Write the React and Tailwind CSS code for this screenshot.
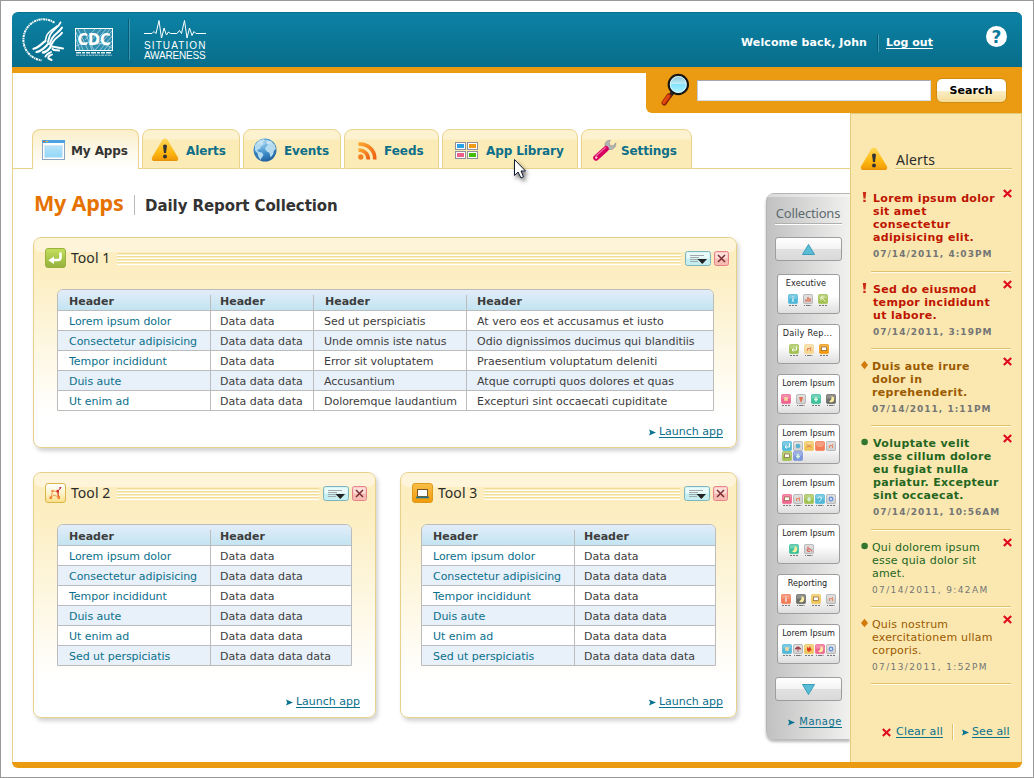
import React from "react";

/* ---------- logos ---------- */

function HhsLogo() {
  return (
    <svg className="block h-11 w-11" viewBox="0 0 44 44" fill="none">
      <path d="M33.500 4.700A20.600 20.600 0 0 0 18 1.700A20.700 20.700 0 0 0 20.500 42.300" stroke="#fff" strokeWidth="2" strokeDasharray="2.300 .7 1.200 .6" />
      <g stroke="#fff" strokeLinecap="round">
        <path d="M39.500 4.500C37.500 10 30.500 11.500 28.500 18.500L27 24" strokeWidth="1.900" />
        <path d="M41 9.500C39 14 33.500 15.500 31 20.500L28.500 26" strokeWidth="1.900" />
        <path d="M41 14.800C39 18.500 34.500 19.500 32.500 23L29.500 28" strokeWidth="1.900" />
        <path d="M36 8C33 11 27 13 25.500 18L24.500 22" strokeWidth="1.500" />
        <path d="M24.500 23C21 25 18 29.500 12.500 30.800" strokeWidth="2.200" />
        <path d="M27 26C24 29 21 33 15.500 34" strokeWidth="2.200" />
        <path d="M29.500 29C27 32 26.500 34 22 34.500" strokeWidth="2.400" />
        <path d="M31 28.500L42 30.500M31.500 31C34 33.500 36 31.500 38 32.500" strokeWidth="2" />
        <path d="M30 34C27.500 35.500 25.500 36 24.500 38.500M31 36.500C29.500 37.500 26.500 37.500 27.500 40.500L30.500 42" strokeWidth="2" />
      </g>
    </svg>
  );
}

function CdcLogo() {
  return (
    <svg className="block h-7 w-[38px] overflow-visible" viewBox="0 0 38 28">
      <rect x=".5" y=".5" width="37" height="22" fill="#2f8fae" stroke="#fff" />
      <g stroke="#bfe0ea" strokeWidth=".7" fill="none">
        <path d="M1 4L8 22M1 11L5 22M3 1L13 22M9 1L17 22M16 17L19 22M37 3L20 22M37 8L25 22M37 13L29 22M37 17L33 22M31 1L17 18M26 1L15 14M20 1L10 12M35 1L22 17" />
        <path d="M1 18C10 13 25 13 37 20" />
      </g>
      <text x="2.500" y="16.500" textLength="33" lengthAdjust="spacingAndGlyphs" fill="#fff" className="font-['DejaVu_Sans'] text-[16px] font-bold">CDC</text>
      <path d="M1 24.700H37" stroke="#fff" strokeWidth="1.600" strokeDasharray="5 1 3 1 4 1" opacity=".9" />
      <path d="M1 27.200H37" stroke="#fff" strokeWidth="1" strokeDasharray="3 .7 2 .6" opacity=".7" />
    </svg>
  );
}

function SituationLogo() {
  return (
    <div className="flex w-16 flex-col font-['Liberation_Sans',sans-serif] text-[10px] leading-[10px] text-white">
      <svg className="block h-5 w-[63px]" viewBox="0 0 63 20" fill="none" stroke="#fff" strokeLinejoin="round">
        <path d="M0 15.500H8L10 13.500L12 15.500L15 2.500L17.500 20.500L20 10L22.500 17L24.500 14L26.500 15.500H33L35.500 12.500L37.500 15.500L40.500 2.500L43 20L45.500 10L48 17.500L50 13.500L52 15.500H62" />
      </svg>
      <span className="mt-[3px] whitespace-nowrap tracking-[1.1px]">SITUATION</span>
      <span className="whitespace-nowrap tracking-[-0.2px]">AWARENESS</span>
    </div>
  );
}

/* ---------- icons ---------- */

function WarningIcon() {
  return (
    <svg className="block h-[23px] w-7 shrink-0" viewBox="0 0 28 23">
      <defs>
        <linearGradient id="warn" x1="0" y1="0" x2="0" y2="1">
          <stop offset="0" stopColor="#ffd75a" />
          <stop offset=".6" stopColor="#fdb813" />
          <stop offset="1" stopColor="#f09a05" />
        </linearGradient>
      </defs>
      <path d="M11.600 1.600Q14 -.8 16.400 1.600L27 19.500Q28 22.800 25 22.800H3Q0 22.800 1 19.500Z" fill="url(#warn)" />
      <path d="M2 22.300H26" stroke="#e58c00" />
      <path d="M12 7.500Q14 5.300 16 7.500L15 15H13Z" fill="#333" />
      <circle cx="14" cy="18.500" r="2" fill="#333" />
    </svg>
  );
}

function WindowIcon() {
  return (
    <svg className="block h-5 w-[23px]" viewBox="0 0 23 20">
      <defs>
        <linearGradient id="win" x1="0" y1="0" x2="0" y2="1">
          <stop offset="0" stopColor="#b9e3f8" />
          <stop offset="1" stopColor="#90d8f8" />
        </linearGradient>
      </defs>
      <rect x=".5" y=".5" width="22" height="19" fill="#fff" stroke="#8ba6c4" />
      <rect width="23" height="3" fill="#4aa3e0" />
      <path d="M1 1.500h2" stroke="#e8542c" />
      <path d="M4 1.500h2" stroke="#e9c33a" />
      <rect x="2.500" y="5.500" width="18" height="12" fill="url(#win)" stroke="#d4e9f5" />
    </svg>
  );
}

function GlobeIcon() {
  return (
    <svg className="block h-6 w-6" viewBox="0 0 24 24">
      <defs>
        <radialGradient id="globe" cx=".4" cy=".25" r=".8">
          <stop offset="0" stopColor="#8cc6ea" />
          <stop offset=".5" stopColor="#3f8fca" />
          <stop offset="1" stopColor="#1d5c9a" />
        </radialGradient>
      </defs>
      <circle cx="12" cy="12" r="11.500" fill="url(#globe)" />
      <g fill="#b5dbf0">
        <path d="M2 7L6 2.500L11 1L12 3L9.500 4L10.500 6.500L8 8.500L7 11L4 12L6 14L9 14.500L10.500 17L8.500 20L7.500 22L5.500 19L4.500 15L2 12.500Z" />
        <path d="M13 2L18 3L21.500 6.500L23 11L21 12.500L20 16.500L17.500 19.500L16.500 15L14 13.500L12 11L13 8.500L15 7L13.500 5Z" />
      </g>
      <path d="M4 5Q12 -1 20 5Q12 8 4 5Z" fill="#fff" opacity=".25" />
    </svg>
  );
}

function RssIcon() {
  return (
    <svg className="block h-[18px] w-[19px]" viewBox="0 0 19 18" fill="none">
      <defs>
        <linearGradient id="rss" x1="0" y1="0" x2="1" y2="1">
          <stop offset="0" stopColor="#fba62f" />
          <stop offset="1" stopColor="#ee5f12" />
        </linearGradient>
      </defs>
      <path d="M.5 2.200A14.500 14 0 0 1 16.600 17.500" stroke="url(#rss)" strokeWidth="3.600" />
      <path d="M.5 8.200A9 9 0 0 1 10.300 17.500" stroke="url(#rss)" strokeWidth="3.600" />
      <circle cx="2.800" cy="15" r="2.700" fill="#f58220" />
    </svg>
  );
}

function LibraryIcon() {
  const tiles = [
    [0, 0, "#2ba3e4"],
    [12, 0, "#f09b18"],
    [0, 9, "#ec5f87"],
    [12, 9, "#46bd06"],
  ];
  return (
    <svg className="block h-[18px] w-6" viewBox="0 0 24 18">
      {tiles.map(([x, y, c]) => (
        <g key={c}>
          <rect x={x + 0.5} y={y + 0.5} width="10" height="7" fill="#fff" stroke="#8f8f9a" />
          <rect x={x + 2} y={y + 2} width="7" height="4" fill={c} />
        </g>
      ))}
    </svg>
  );
}

function WrenchIcon() {
  return (
    <svg className="block h-[22px] w-6" viewBox="0 0 24 22" fill="none">
      <path d="M14 8L16 10" stroke="#999" strokeWidth="4" />
      <path d="M17.500 1.300Q13 1 12 5Q11.500 9.500 15 10.800Q19.500 11.500 22.500 7.500L22.800 3.800L19.800 7L16.500 6L16.300 3Z" fill="#b4b4b6" stroke="#8f8f92" strokeWidth=".6" />
      <path d="M3 18.800L13 9.800" stroke="#d8005f" strokeWidth="5.600" strokeLinecap="round" />
      <path d="M3 17L12.500 8.500" stroke="#f45f9e" strokeWidth="1.400" strokeLinecap="round" />
      <circle cx="3.300" cy="18.600" r="1.200" fill="#f9d3e2" />
    </svg>
  );
}

function MagnifierIcon() {
  return (
    <svg className="block h-[33px] w-[30px]" viewBox="0 -1 30 33" fill="none">
      <defs>
        <linearGradient id="lens" x1="0" y1="0" x2="0" y2="1">
          <stop offset="0" stopColor="#7fbccb" />
          <stop offset=".45" stopColor="#bdeef8" />
          <stop offset=".5" stopColor="#86e4fb" />
          <stop offset="1" stopColor="#b5f3ff" />
        </linearGradient>
      </defs>
      <path d="M13 18L9.500 22.500" stroke="#222" strokeWidth="4" />
      <path d="M9 22L4.300 28.800" stroke="#8f2106" strokeWidth="5.400" strokeLinecap="round" />
      <path d="M8.500 22L3.800 28.500" stroke="#e4480f" strokeWidth="3" strokeLinecap="round" />
      <circle cx="18.300" cy="10.500" r="9.600" fill="url(#lens)" stroke="#171717" strokeWidth="2.200" />
      <circle cx="18.300" cy="10.500" r="8" stroke="#e8fbff" strokeWidth=".8" />
    </svg>
  );
}

function HelpIcon() {
  return (
    <span className="flex h-[21px] w-[21px] items-center justify-center rounded-full bg-white pt-px font-['DejaVu_Sans',sans-serif] text-[17px] leading-none font-bold text-[#0a7a9a]">
      ?
    </span>
  );
}

function Cross() {
  return (
    <svg className="block h-[9px] w-[9px] shrink-0" viewBox="0 0 9 9" stroke="#df0a1d" strokeWidth="2.100">
      <path d="M.8 1L8.200 8M8.200 1L.8 8" />
    </svg>
  );
}

function ArrowHead() {
  return (
    <svg className="block h-[7px] w-[7px] shrink-0" viewBox="0 0 7 7">
      <path d="M0 0.500L7 3.500L0 6.500L1.200 3.500Z" fill="#0a738f" />
    </svg>
  );
}

function Cursor() {
  return (
    <svg className="absolute top-[28px] left-[70px] z-10 h-[26px] w-[18px] drop-shadow-[2px_3px_2px_rgba(0,0,0,0.55)]" viewBox="0 0 18 26">
      <path d="M1.500 1.500V17.500L5 14L8 20L10.500 18.800L8 13H12.500Z" fill="#fff" stroke="#111b33" />
    </svg>
  );
}

/* ---------- header ---------- */

function Header() {
  return (
    <header className="flex h-[55px] shrink-0 rounded-t-md border-t border-[#0a6f8c] bg-gradient-to-b from-[#0c82a4] to-[#086d8a] pr-[15px] pl-[9px]">
      <div className="pt-[5px]"><HhsLogo /></div>
      <div className="ml-[10px] pt-[15px]"><CdcLogo /></div>
      <div className="mt-1.5 ml-[15px] h-[41px] w-0.5 border-r border-[#3c9ab5] bg-[#075d77]" />
      <div className="ml-[14px] pt-[5px]"><SituationLogo /></div>
      <div className="ml-auto flex pt-[21px] font-['DejaVu_Sans',sans-serif] text-[11px] leading-[18px] font-bold text-white">
        <span className="w-[126px] whitespace-nowrap tracking-[0.1px]">Welcome back, John</span>
        <span className="ml-[10px] h-[18px] w-0.5 border-r border-[#3c9ab5] bg-[#075d77]" />
        <a className="ml-[7px] w-[54px] whitespace-nowrap underline underline-offset-2">Log out</a>
      </div>
      <div className="ml-[46px] pt-[13px]"><HelpIcon /></div>
    </header>
  );
}

function SearchBar() {
  return (
    <div className="flex h-10 w-[376px] rounded-bl-md bg-[#eb9b11] pl-[14px] font-['DejaVu_Sans',sans-serif]">
      <MagnifierIcon />
      <div className="mt-[7px] ml-[7px] h-[21px] w-[234px] border border-t-[#a5a5b5] border-r-[#d5dbe8] border-b-[#d5dbe8] border-l-[#c5cada] bg-white" />
      <button className="mt-[5px] ml-[5px] flex h-[25px] w-[71px] items-center justify-center rounded-md border border-[#cf8a10] bg-gradient-to-b from-white from-50% via-[#fcefc8] via-50% to-[#f5dc94] pt-px pr-px text-[11px] font-bold tracking-[0.1px] text-black">
        Search
      </button>
    </div>
  );
}

const tabs = [
  { label: "My Apps", Icon: WindowIcon, box: "w-[107px] pl-[9px]", gap: "ml-[6px] tracking-[-0.1px]", icon: "pt-[10px]", active: true },
  { label: "Alerts", Icon: WarningIcon, box: "w-[98px] pl-[8px]", gap: "ml-[7px] tracking-[-0.1px]", icon: "pt-[8px]" },
  { label: "Events", Icon: GlobeIcon, box: "w-[98px] pl-[9px]", gap: "ml-[7px] tracking-[-0.1px]", icon: "pt-[8px]" },
  { label: "Feeds", Icon: RssIcon, box: "w-[95px] pl-[13px]", gap: "ml-[7px]", icon: "pt-[12px]" },
  { label: "App Library", Icon: LibraryIcon, box: "w-[136px] pl-[12px]", gap: "ml-[7px] tracking-[-0.1px]", icon: "pt-[12px]", cursor: true },
  { label: "Settings", Icon: WrenchIcon, box: "w-[111px] pl-[11px]", gap: "ml-[4px] tracking-[-0.1px]", icon: "pt-[9px]" },
];

function Tabs() {
  return (
    <nav className="mt-4 flex h-10 shrink-0 font-['DejaVu_Sans',sans-serif]">
      <div className="w-[19px] border-b border-[#e8d189]" />
      {tabs.map(({ label, Icon, box, gap, icon, active, cursor }) => (
        <React.Fragment key={label}>
          <div
            className={`relative flex rounded-t-lg border border-[#ead48d] ${box} ${
              active
                ? "border-b-0 bg-gradient-to-b from-[#fbefcb] to-white"
                : "bg-[linear-gradient(#fdf2d0_9px,#fbebb6_10px)]"
            }`}
          >
            <span className={icon}><Icon /></span>
            <span className={`${gap} pt-3 text-[12px] leading-[18px] font-bold whitespace-nowrap ${active ? "text-[#333]" : "text-[#0d6e89]"}`}>
              {label}
            </span>
            {cursor && <Cursor />}
          </div>
          {label !== "Settings" && <div className="w-[3px] border-b border-[#e8d189]" />}
        </React.Fragment>
      ))}
      <div className="flex-1 border-b border-[#e8d189]" />
    </nav>
  );
}

/* ---------- tool cards ---------- */

function ReturnBadge() {
  return (
    <svg className="block h-5 w-[21px]" viewBox="0 0 21 20">
      <defs>
        <linearGradient id="ret" x1="0" y1="0" x2="0" y2="1">
          <stop offset="0" stopColor="#c3e05c" />
          <stop offset="1" stopColor="#93b03c" />
        </linearGradient>
      </defs>
      <rect x=".5" y=".5" width="20" height="19" rx="2.500" fill="url(#ret)" stroke="#9bb13f" />
      <path d="M15.500 4.500V9.500Q15.500 12 13 12H8" fill="none" stroke="#fff" strokeWidth="2.600" />
      <path d="M3.300 12.200L9 8.500V16Z" fill="#fff" />
    </svg>
  );
}

function GraphBadge() {
  return (
    <svg className="block h-5 w-[21px]" viewBox="0 0 21 20">
      <defs>
        <linearGradient id="gra" x1="0" y1="0" x2="0" y2="1">
          <stop offset="0" stopColor="#fff" />
          <stop offset=".5" stopColor="#fef3cd" />
          <stop offset="1" stopColor="#fbdf83" />
        </linearGradient>
      </defs>
      <rect x=".5" y=".5" width="20" height="19" rx="2.500" fill="url(#gra)" stroke="#d9b649" />
      <path d="M7.500 8L12.500 8.500L13 14M7.500 8L6 14.500L9 12L13.500 14" fill="none" stroke="#f79a52" />
      <path d="M12.500 8.500L16 4.500" stroke="#b5243c" />
      <path d="M13 8L13.500 14" stroke="#d4402c" />
      <g fill="#f58233">
        <rect x="6.500" y="7" width="2" height="2" />
        <rect x="4.500" y="13.500" width="2.500" height="2.500" />
        <rect x="12.500" y="13" width="2.500" height="3" />
      </g>
      <rect x="11.500" y="7" width="2.500" height="2.500" fill="#d52a2a" />
      <rect x="14.500" y="4" width="1.500" height="1.500" fill="#c02038" />
    </svg>
  );
}

function LaptopBadge() {
  return (
    <svg className="block h-5 w-[21px]" viewBox="0 0 21 20">
      <defs>
        <linearGradient id="lap" x1="0" y1="0" x2="0" y2="1">
          <stop offset="0" stopColor="#f9c04a" />
          <stop offset="1" stopColor="#f19a08" />
        </linearGradient>
      </defs>
      <rect x=".5" y=".5" width="20" height="19" rx="2.500" fill="url(#lap)" stroke="#dd9a1b" />
      <rect x="5.500" y="6.500" width="10" height="7" fill="#fff" stroke="#7a5a28" />
      <path d="M4 14.500H17" stroke="#25758a" strokeWidth="1.600" />
    </svg>
  );
}

const headPad = ["pl-[11px]", "border-l pl-[9px]", "border-l pl-[11px]", "border-l pl-[10px]"];
const cellPad = [
  "pl-[11px] tracking-[-0.04px] text-[#0b708c]",
  "border-l pl-[9px]",
  "border-l pl-[10px] tracking-[-0.03px]",
  "border-l pl-[10px]",
];

function DataTable({ columns, rows, grid }) {
  return (
    <div className="overflow-hidden rounded-t-md border border-[#bcbcbc] text-[11px] text-[#3d3d3d]">
      <div className={`grid h-5 bg-gradient-to-b from-[#e2edf9] to-[#c3e4f1] font-bold ${grid}`}>
        {columns.map((c, i) => (
          <div key={i} className="flex flex-col">
            <div className="h-[5px] shrink-0" />
            <div className={`flex-1 border-[#bcbcbc] leading-[13px] ${headPad[i]}`}>{c}</div>
          </div>
        ))}
      </div>
      {rows.map((row, r) => (
        <div key={r} className={`grid h-5 border-t border-[#bcbcbc] ${r % 2 ? "bg-[#e8f0f9]" : "bg-white"} ${grid}`}>
          {row.map((cell, i) => (
            <div key={i} className={`h-[19px] border-[#bcbcbc] leading-[21px] whitespace-nowrap ${cellPad[i]}`}>
              {cell}
            </div>
          ))}
        </div>
      ))}
    </div>
  );
}

function ToolCard({ title, badge, size, pad, right, launch, table }) {
  return (
    <section
      className={`flex shrink-0 flex-col rounded-lg border border-[#e6d08a] bg-gradient-to-b from-[#fceec0] from-15% to-white to-85% shadow-[2px_3px_4px_rgba(0,0,0,0.18)] ${size}`}
    >
      <div className="-mb-[14px] h-[14px] shrink-0 rounded-lg bg-[#fef4d9]" />
      <div className={`flex h-[41px] shrink-0 items-start pl-[11px] ${right}`}>
        <div className="pt-[10px]">{badge}</div>
        <h2 className="relative ml-[5px] w-[40px] pt-[10px] font-['Noto_Sans',sans-serif] text-[14px] leading-5 tracking-[0.05px] whitespace-nowrap text-[#2b2b2b]">{title}</h2>
        <div className="relative mt-[15px] ml-[6px] flex h-[12px] flex-1 flex-col">
          {[0, 1, 2, 3].map((i) => (
            <div key={i} className="h-[3px] shrink-0 border-t border-b border-t-[#efdc97] border-b-white" />
          ))}
        </div>
        <div className="mt-[13px] ml-1 flex gap-[3px]">
          <svg className="block h-[15px] w-[26px]" viewBox="0 0 26 15">
            <rect x=".5" y=".5" width="25" height="14" rx="2" fill="#c5eef0" stroke="#7fb5bb" />
            <rect x="1.500" y="1.500" width="23" height="6" fill="#e8fafa" />
            <path d="M5 4.500H19M5 6.500H14M5 8.500H19M5 10.500H13" stroke="#a2a9ab" />
            <path d="M12.500 8H22L17.300 13Z" fill="#222" />
          </svg>
          <svg className="block h-[15px] w-[15px]" viewBox="0 0 15 15">
            <rect x=".5" y=".5" width="14" height="14" rx="2" fill="#f6bcb2" stroke="#e8808a" />
            <rect x="1.500" y="1.500" width="12" height="6" fill="#fbe0da" />
            <path d="M4 4L11 11M11 4L4 11" stroke="#7d2c34" strokeWidth="1.500" />
          </svg>
        </div>
      </div>
      <div className={`mt-[10px] ${pad}`}><DataTable {...table} /></div>
      <div className={`mt-auto flex items-center justify-end gap-[3px] pb-[8px] text-[11px] leading-[14px] text-[#0b708c] ${launch}`}>
        <ArrowHead />
        <a className="underline underline-offset-2">Launch app</a>
      </div>
    </section>
  );
}

const wideTable = {
  grid: "grid-cols-[152px_103px_153px_1fr]",
  columns: ["Header", "Header", "Header", "Header"],
  rows: [
    ["Lorem ipsum dolor", "Data data", "Sed ut perspiciatis", "At vero eos et accusamus et iusto"],
    ["Consectetur adipisicing", "Data data data", "Unde omnis iste natus", "Odio dignissimos ducimus qui blanditiis"],
    ["Tempor incididunt", "Data data", "Error sit voluptatem", "Praesentium voluptatum deleniti"],
    ["Duis aute", "Data data data", "Accusantium", "Atque corrupti quos dolores et quas"],
    ["Ut enim ad", "Data data data", "Doloremque laudantium", "Excepturi sint occaecati cupiditate"],
  ],
};

const narrowTable = {
  grid: "grid-cols-[152px_1fr]",
  columns: ["Header", "Header"],
  rows: [
    ["Lorem ipsum dolor", "Data data"],
    ["Consectetur adipisicing", "Data data data"],
    ["Tempor incididunt", "Data data"],
    ["Duis aute", "Data data data"],
    ["Ut enim ad", "Data data data"],
    ["Sed ut perspiciatis", "Data data data data"],
  ],
};

/* ---------- collections ---------- */

const fills = {
  blue: "#52b9d8",
  grey: "#d3d3d3",
  green: "#a3c254",
  cream: "#f6d792",
  orange: "#f39a12",
  pink: "#ef6791",
  teal: "#3fc29c",
  dark: "#6d6d6a",
  gold: "#efc65c",
  coral: "#f27d58",
  indigo: "#7e97dc",
};

const glyphs = {
  info: <path d="M5 2.200V3.300M5 4.300V7.800" stroke="#e8f8fc" strokeWidth="1.300" />,
  bars: <path d="M3 7.800V5.500M5 7.800V3M7 7.800V4.300" stroke="#e2613a" strokeWidth="1.200" />,
  arrow: <path d="M7.500 7.500L3 3M3 6.500V3H6.500" stroke="#f4f9da" />,
  back: <path d="M7.500 2.500V6H3M4.500 4.300L3 6L4.500 7.500" stroke="#fff" />,
  nodes: <path d="M3.500 7V4.500H6.500V7M6.500 4L7 3" stroke="#ea8460" />,
  screen: <rect x="2.500" y="3" width="5" height="3.500" fill="#fff" stroke="#8b6230" strokeWidth=".7" />,
  square: <rect x="3.200" y="3.200" width="3.600" height="3.600" fill="#f3d9a0" />,
  pin: <path d="M3.500 3.500H6.500L5 7.800Z" fill="#e2704f" stroke="#e2704f" />,
  club: <path d="M5 3V7.500M3 5.500H7" stroke="#d6f5dd" strokeWidth="1.600" />,
  moon: <path d="M5.300 2.200A3 3 0 1 1 3 7.200A3.600 3.600 0 0 0 5.300 2.200Z" fill="#fdf0a0" />,
  dot: <circle cx="5" cy="5" r="2.300" fill="#58b3cf" />,
  spread: <path d="M2.500 3.500L5 5L7.500 3.500M2.500 6.500L5 5L7.500 6.500" stroke="#e0814c" strokeWidth=".8" />,
  wave: <path d="M2.500 5H7.500" stroke="#f7b184" strokeWidth="1.400" />,
  swirl: <path d="M2.500 4Q5 1.500 6.500 3.500Q7 5.500 4 7.800" stroke="#d8f3fa" />,
  chair: <path d="M4 2.500V5H6.500L8 7.500M3 5Q2.500 8 6 7.500" stroke="#dc5445" />,
  flower: <circle cx="5" cy="5" r="1.800" fill="#cfe0f8" stroke="#5f8fdd" strokeWidth="1.200" />,
  umbrella: <path d="M2 5Q5 .5 8 5ZM5 5V8" fill="#a8424a" stroke="#a8424a" strokeWidth=".7" />,
  flame: <path d="M3 3L5 4L6 2L7.500 6L5 8L3 6.500Z" fill="#df3d20" />,
};

const collections = [
  { name: "Executive", title: "-ml-[5px] tracking-[0.1px]", row: "-ml-[1px]", icons: [["blue", "info"], ["grey", "bars"], ["green", "arrow"]] },
  { name: "Daily Rep...", title: "-ml-[2px] tracking-[0.3px]", icons: [["green", "back"], ["cream", "nodes"], ["orange", "screen"]] },
  { name: "Lorem Ipsum", icons: [["pink", "square"], ["grey", "pin"], ["teal", "club"], ["dark", "moon"]] },
  {
    name: "Lorem Ipsum",
    packed: true,
    icons: [["blue", "back"], ["grey", "dot"], ["gold", "spread"], ["coral", "wave"], ["grey", "nodes"], ["green", "screen"], ["indigo", "club"]],
  },
  { name: "Lorem Ipsum", icons: [["pink", "screen"], ["grey", "nodes"], ["green", "club"], ["blue", "swirl"], ["grey", "flower"]] },
  { name: "Lorem Ipsum", row: "-ml-[15px]", icons: [["teal", "moon"], ["grey", "chair"]] },
  { name: "Reporting", title: "-ml-[2px]", icons: [["coral", "info"], ["dark", "moon"], ["gold", "screen"], ["grey", "nodes"]] },
  { name: "Lorem Ipsum", icons: [["blue", "square"], ["grey", "umbrella"], ["gold", "flame"], ["pink", "moon"], ["grey", "flower"]] },
];

function MiniIcon({ fill, glyph, caption, index }) {
  return (
    <svg className={caption ? "block h-[13px] w-[10px]" : "block h-[10px] w-[10px]"} viewBox={caption ? "0 0 10 13" : "0 0 10 10"} fill="none">
      <rect x=".4" y=".4" width="9.200" height="9.200" rx="1.500" fill={fills[fill]} stroke={fill === "grey" ? "#aaa" : fills[fill]} strokeWidth=".8" />
      <rect x="1" y="1" width="8" height="3.500" fill="#fff" opacity=".25" />
      {glyphs[glyph]}
      {caption && <path d="M1 11.500H9" stroke="#777" strokeDasharray={index % 2 ? "1 1 4 .5" : "2 1"} />}
    </svg>
  );
}

function CollectionCard({ name, icons, packed, title = "", row = "" }) {
  const spread = packed
    ? "w-[54px] flex-wrap gap-x-[1px]"
    : icons.length === 5
      ? "gap-[1px] justify-center"
      : "gap-[5px] justify-center";
  return (
    <div className="flex h-10 w-[63px] flex-col items-center rounded-[3px] border border-[#9d9d9d] bg-gradient-to-b from-white from-55% to-[#dedede]">
      <span className={`pt-[2px] font-['DejaVu_Sans_Condensed','DejaVu_Sans',sans-serif] text-[9px] leading-3 [font-stretch:condensed] whitespace-nowrap text-[#1c1c1c] ${title}`}>
        {name}
      </span>
      <div className={`flex ${packed ? "mt-[2px]" : "mt-[5px]"} ${spread} ${row}`}>
        {icons.map(([fill, glyph], i) => (
          <MiniIcon key={i} fill={fill} glyph={glyph} caption={!packed} index={i} />
        ))}
      </div>
    </div>
  );
}

function Scroller({ down }) {
  return (
    <div className="flex h-6 w-[67px] items-center justify-center rounded-[3px] border border-[#9d9d9d] bg-[linear-gradient(#fff_0,#f3f3f3_50%,#e0e0e0_50%,#dadada)]">
      <svg className="block h-[11px] w-[13px]" viewBox="0 0 13 11">
        <path d={down ? "M.5 .5H12.500L6.500 10.500Z" : "M.5 10.500H12.500L6.500 .5Z"} fill="#5bbcd6" stroke="#3a9dbb" />
      </svg>
    </div>
  );
}

function Collections() {
  return (
    <div className="mt-6 flex h-[546px] w-[84px] shrink-0 flex-col items-center rounded-l-lg border-t border-l border-[#b5b5b5] bg-gradient-to-r from-[#c1c1c1] to-[#f1f1f0] shadow-[0_3px_3px_rgba(0,0,0,0.28)]">
      <div className="h-[3px] w-full shrink-0 rounded-tl-lg bg-white/40" />
      <h3 className="mt-[6px] h-[21px] w-[67px] border-b border-[#b0b0b0] pr-px text-center font-['Noto_Sans',sans-serif] text-[13px] leading-[20px] tracking-[-0.2px] text-[#5d6a6e] shadow-[0_1px_0_#fff]">
        Collections
      </h3>
      <div className="mt-[13px]"><Scroller /></div>
      <div className="my-[13px] flex flex-col gap-[10px]">
        {collections.map((c, i) => (
          <CollectionCard key={i} {...c} />
        ))}
      </div>
      <Scroller down />
      <div className="mt-[14px] flex w-full items-center justify-end gap-1 pr-2 font-['DejaVu_Sans',sans-serif] text-[10px] leading-[14px] text-[#0b708c]">
        <ArrowHead />
        <a className="tracking-[0.5px] underline underline-offset-2">Manage</a>
      </div>
    </div>
  );
}

/* ---------- alerts ---------- */

const alerts = [
  { level: "high", bold: true, indent: true, height: "h-[91px]", lines: ["Lorem ipsum dolor", "sit amet", "consectetur", "adipisicing elit."], time: "07/14/2011, 4:03PM" },
  { level: "high", bold: true, indent: true, height: "h-[77px]", lines: ["Sed do eiusmod", "tempor incididunt", "ut labore."], time: "07/14/2011, 3:19PM" },
  { level: "medium", bold: true, height: "h-[77px]", lines: ["Duis aute irure", "dolor in", "reprehenderit."], time: "07/14/2011, 1:11PM" },
  { level: "low", bold: true, indent: true, height: "h-[104px]", lines: ["Voluptate velit", "esse cillum dolore", "eu fugiat nulla", "pariatur. Excepteur", "sint occaecat."], time: "07/14/2011, 10:56AM" },
  { level: "low", height: "h-[77px]", lines: ["Qui dolorem ipsum", "esse quia dolor sit", "amet."], time: "07/14/2011, 9:42AM" },
  { level: "medium", height: "h-[77px]", lines: ["Quis nostrum", "exercitationem ullam", "corporis."], time: "07/13/2011, 1:52PM" },
];

const levelText = { high: "text-[#be1400]", medium: "text-[#9b5a00]", low: "text-[#24661f]" };

function LevelMark({ level }) {
  return (
    <svg className="mt-[10px] block h-3 w-2 shrink-0" viewBox="0 0 8 12">
      {level === "high" && <path d="M2.800 1H6.200L5.500 7.500H3.500ZM3.300 8.800H5.700V11H3.300Z" fill="#cc2a14" />}
      {level === "medium" && <path d="M4.500 1.800L8 6L4.500 10.200L1 6Z" fill="#d27a0a" />}
      {level === "low" && <circle cx="4.600" cy="6" r="3.300" fill="#33762f" />}
    </svg>
  );
}

function AlertItem({ level, bold, indent, height, lines, time }) {
  return (
    <li className={`flex ${height} ${bold ? "font-bold" : ""}`}>
      <LevelMark level={level} />
      <div className={`ml-[3px] flex w-[140px] shrink-0 flex-col border-b border-[#dfc36a] pt-[11px] shadow-[0_1px_0_#fffbe8] ${indent ? "pl-[2px]" : "pl-[1px]"}`}>
        <div className="flex justify-between">
          <p className={`text-[11px] leading-[13px] whitespace-nowrap ${levelText[level]} ${bold ? "tracking-[0.34px]" : "tracking-[0.2px]"}`}>
            {lines.map((line) => (
              <span key={line} className="block">{line}</span>
            ))}
          </p>
          <div className="-mt-[3px] -mr-px -ml-5"><Cross /></div>
        </div>
        <p className={`mt-[4px] text-[9px] leading-[13px] whitespace-nowrap text-[#757575] ${bold ? "tracking-[1.02px]" : "tracking-[1.38px]"}`}>{time}</p>
      </div>
    </li>
  );
}

function AlertsPanel() {
  return (
    <aside className="flex w-[172px] shrink-0 flex-col border-x border-t border-[#e3cb7c] bg-[#fae8b0] pl-[9px] font-['DejaVu_Sans',sans-serif]">
      <div className="mt-[33px] flex h-6">
        <WarningIcon />
        <h2 className="ml-[7px] h-[22px] w-[117px] border-b border-[#e0c56d] pt-[3px] pl-[1px] font-['Noto_Sans',sans-serif] text-[14px] leading-5 tracking-[0.2px] text-[#2b2b2b] shadow-[0_1px_0_#fffbe8]">
          Alerts
        </h2>
      </div>
      <ul className="mt-[10px]">
        {alerts.map((a) => (
          <AlertItem key={a.time} {...a} />
        ))}
      </ul>
      <div className="mt-[40px] flex items-center pl-[22px] text-[11px] text-[#0b708c]">
        <Cross />
        <a className="ml-[5px] w-[47px] tracking-[0.2px] whitespace-nowrap underline underline-offset-2">Clear all</a>
        <span className="ml-[9px] h-4 w-0.5 border-r border-white bg-[#dfc36a]" />
        <span className="ml-[8px]"><ArrowHead /></span>
        <a className="ml-[3px] tracking-[0.1px] whitespace-nowrap underline underline-offset-2">See all</a>
      </div>
    </aside>
  );
}

/* ---------- page ---------- */

export default function App() {
  return (
    <div className="h-[778px] w-[1034px] overflow-hidden border border-[#999] bg-white p-[11px] pb-0">
      <div className="flex h-[756px] w-[1010px] flex-col">
        <Header />
        <div className="h-1.5 shrink-0 bg-[#eb9b11]" />
        <div className="flex h-10 shrink-0 justify-end border-l border-[#e8d189]">
          <SearchBar />
        </div>
        <div className="flex h-[649px] shrink-0">
          <div className="flex w-[838px] flex-col border-l border-[#e8d189]">
            <Tabs />
            <div className="flex min-h-0 flex-1 justify-between pl-5">
              <main className="flex w-[704px] flex-col font-['DejaVu_Sans',sans-serif]">
                <div className="flex h-[68px] shrink-0 pt-[19px] pl-[1px]">
                  <h1 className="font-['Noto_Sans',sans-serif] text-[21.5px] leading-[30px] font-bold tracking-[-0.2px] whitespace-nowrap text-[#e57100]">My Apps</h1>
                  <div className="mt-[7px] ml-[10px] h-5 w-px bg-[#bbb]" />
                  <p className="ml-[10.5px] pt-[8px] text-[15px] leading-5 font-bold tracking-[-0.08px] whitespace-nowrap text-[#333]">Daily Report Collection</p>
                </div>
                <ToolCard
                  title="Tool 1"
                  badge={<ReturnBadge />}
                  size="h-[211px] w-[704px]"
                  right="pr-[7px]"
                  pad="pr-[22px] pl-[23px]"
                  launch="pr-[13px]"
                  table={wideTable}
                />
                <div className="mt-6 flex justify-between">
                  <ToolCard
                    title="Tool 2"
                    badge={<GraphBadge />}
                    size="h-[246px] w-[343px]"
                    right="pr-[8px]"
                    pad="pr-[23px] pl-[23px]"
                    launch="pr-[15px]"
                    table={narrowTable}
                  />
                  <ToolCard
                    title="Tool 3"
                    badge={<LaptopBadge />}
                    size="h-[246px] w-[337px]"
                    right="pr-[8px]"
                    pad="pr-[20px] pl-[20px]"
                    launch="pr-[13px]"
                    table={narrowTable}
                  />
                </div>
              </main>
              <Collections />
            </div>
          </div>
          <AlertsPanel />
        </div>
        <div className="h-1.5 shrink-0 rounded-b-md bg-[#eb9b11]" />
      </div>
    </div>
  );
}
